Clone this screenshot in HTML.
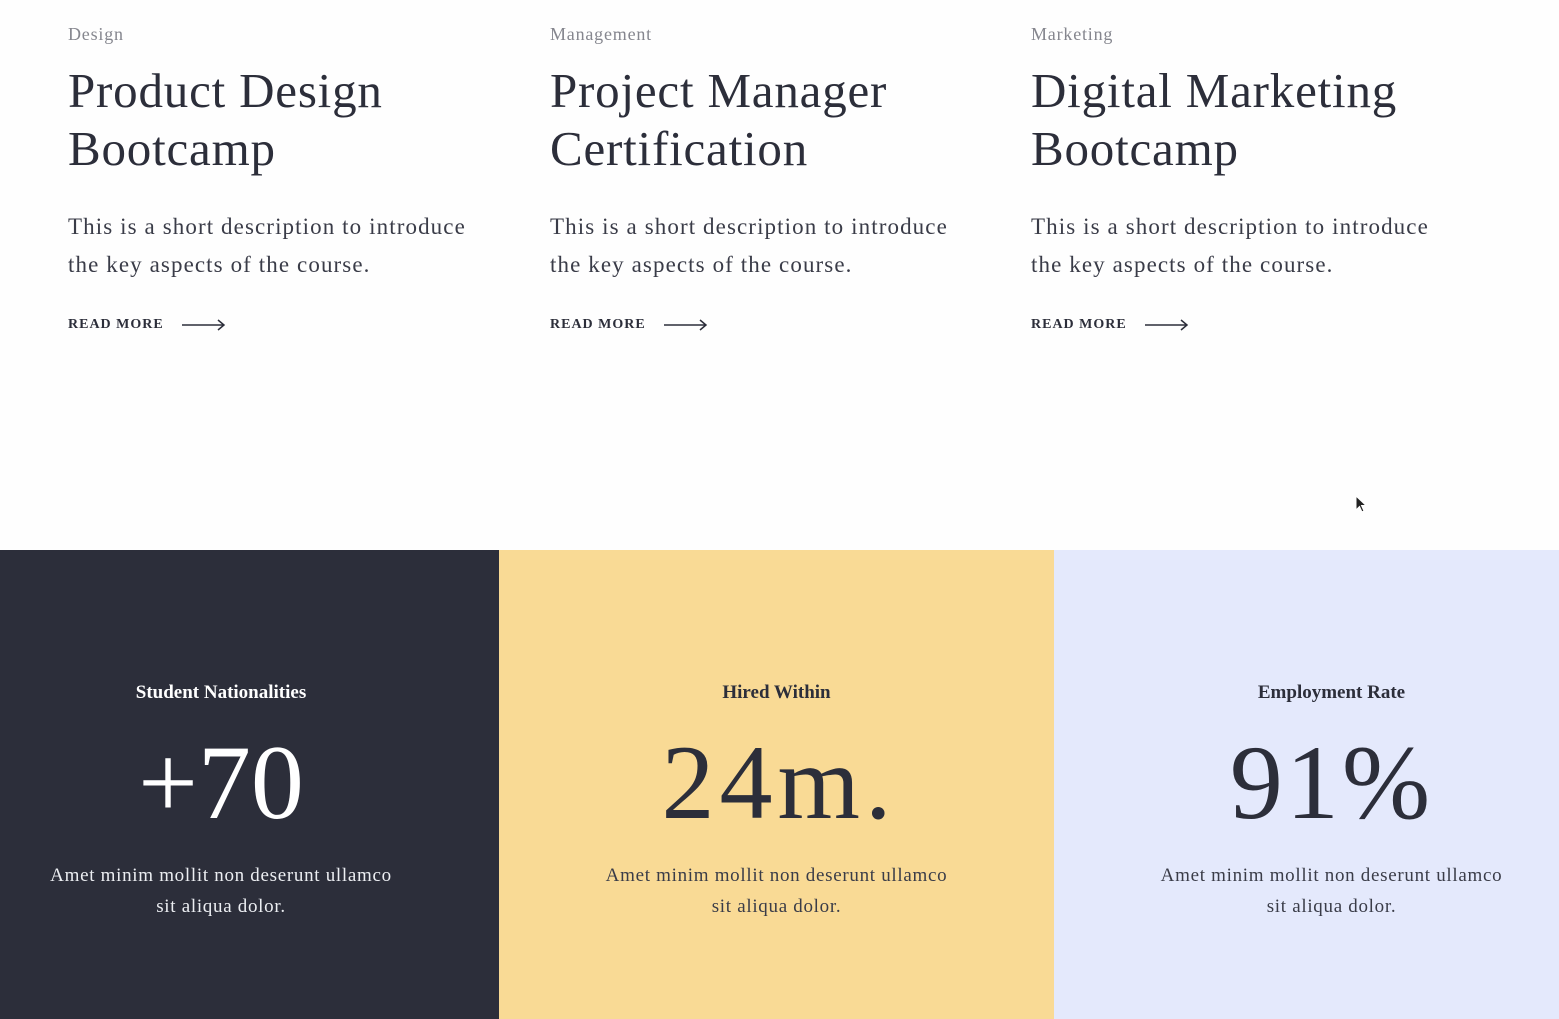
<!DOCTYPE html>
<html><head><meta charset="utf-8"><style>
*{margin:0;padding:0;box-sizing:border-box}
body{width:1559px;height:1019px;background:#fefefe;font-family:"Liberation Serif",serif;color:#2c2e3a;position:relative;overflow:hidden}
.card{position:absolute;top:0;width:440px}
.cat{position:absolute;top:24px;font-size:18px;letter-spacing:0.8px;color:#85868e}
.t{position:absolute;top:62px;font-size:49px;letter-spacing:0.8px;line-height:58px;color:#2c2e3a;white-space:nowrap}
.d{position:absolute;top:208px;font-size:23px;letter-spacing:1.1px;line-height:38px;color:#3a3c48;white-space:nowrap}
.rm{position:absolute;top:317px;font-size:14px;font-weight:bold;letter-spacing:1px;color:#2c2e3a;display:flex;align-items:center;white-space:nowrap}
.rm svg{margin-left:18px;position:relative;top:0px}
.n{position:absolute;top:718px;width:100%;font-size:106px;line-height:130px}
.p{position:absolute;top:860px;width:100%;font-size:19px;letter-spacing:0.7px;line-height:31px}
.l{position:absolute;top:682px;width:100%;font-size:19px;font-weight:bold}
</style></head><body>
<div class="card" style="left:68px"><div class="cat">Design</div><div class="t">Product Design<br>Bootcamp</div><div class="d">This is a short description to introduce<br>the key aspects of the course.</div><div class="rm">READ MORE<svg width="44" height="12" viewBox="0 0 44 12"><path d="M0 6H42M36 1L42 6L36 11" fill="none" stroke="#2c2e3a" stroke-width="1.5"/></svg></div></div>
<div class="card" style="left:550px"><div class="cat">Management</div><div class="t">Project Manager<br>Certification</div><div class="d">This is a short description to introduce<br>the key aspects of the course.</div><div class="rm">READ MORE<svg width="44" height="12" viewBox="0 0 44 12"><path d="M0 6H42M36 1L42 6L36 11" fill="none" stroke="#2c2e3a" stroke-width="1.5"/></svg></div></div>
<div class="card" style="left:1031px"><div class="cat">Marketing</div><div class="t">Digital Marketing<br>Bootcamp</div><div class="d">This is a short description to introduce<br>the key aspects of the course.</div><div class="rm">READ MORE<svg width="44" height="12" viewBox="0 0 44 12"><path d="M0 6H42M36 1L42 6L36 11" fill="none" stroke="#2c2e3a" stroke-width="1.5"/></svg></div></div>

<div style="position:absolute;top:550px;left:0;width:499px;height:469px;background:#2c2e3a"></div>
<div style="position:absolute;top:550px;left:499px;width:555px;height:469px;background:#f9da95"></div>
<div style="position:absolute;top:550px;left:1054px;width:505px;height:469px;background:#e4e9fc"></div>

<div style="position:absolute;left:0;width:442px;top:0;color:#fff;text-align:center">
<div class="l">Student Nationalities</div>
<div class="n">+70</div>
<div class="p" style="color:#eceef2">Amet minim mollit non deserunt ullamco<br>sit aliqua dolor.</div>
</div>
<div style="position:absolute;left:499px;width:555px;top:0;text-align:center">
<div class="l">Hired Within</div>
<div class="n" style="letter-spacing:5px;text-indent:5px">24m.</div>
<div class="p" style="color:#3a3c48">Amet minim mollit non deserunt ullamco<br>sit aliqua dolor.</div>
</div>
<div style="position:absolute;left:1054px;width:555px;top:0;text-align:center">
<div class="l">Employment Rate</div>
<div class="n" style="letter-spacing:3px">91%</div>
<div class="p" style="color:#3a3c48">Amet minim mollit non deserunt ullamco<br>sit aliqua dolor.</div>
</div>
<svg style="position:absolute;left:1355px;top:495px" width="12" height="18" viewBox="0 0 12 18"><path d="M1 1V15L4.5 11.5L7 17L9 16L6.5 10.5H11Z" fill="#222" stroke="#fff" stroke-width="1"/></svg>
</body></html>
